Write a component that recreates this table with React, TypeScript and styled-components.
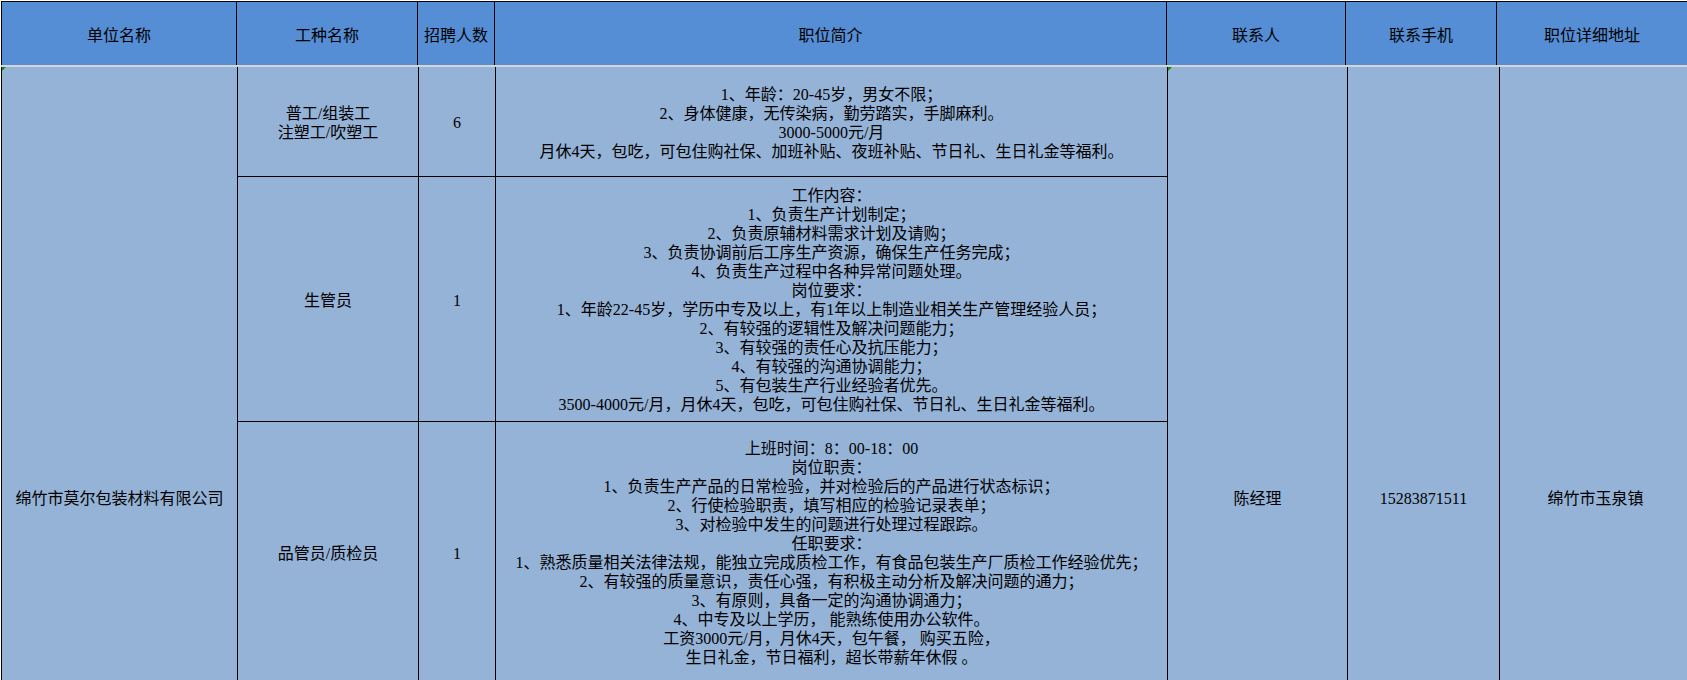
import React from "react";
import styled, { createGlobalStyle } from "styled-components";

const GlobalStyle = createGlobalStyle`
  html, body {
    margin: 0;
    padding: 0;
    overflow: hidden;
    background: #fff;
  }
`;

const COLS = [235, 181, 77, 672, 179, 151, 191];

const Sheet = styled.div`
  margin: 1px 0 0 1px;
  width: max-content;
  border-top: 1px solid #000;
  font-family: "Liberation Serif", "Noto Sans CJK SC", serif;
  font-size: 16px;
  line-height: 19px;
  color: #000;
`;

const HeaderRow = styled.div`
  display: grid;
  grid-template-columns: ${COLS.map((w) => `${w}px`).join(" ")};
  height: 63px;
  border-left: 1px solid #000;
`;

const HeaderCell = styled.div`
  display: flex;
  align-items: center;
  justify-content: center;
  padding-top: 3px;
  background: #558ed5;
  border-right: 1px solid #000;
`;

const Separator = styled.div`
  height: 2px;
  background: #d4d4d4;
`;

const Body = styled.div`
  display: flex;
  height: 860px;
  border-left: 1px solid #000;
  background: #95b3d7;
`;

const SpanCell = styled.div<{ $w: number; $mark?: boolean }>`
  position: relative;
  flex: 0 0 ${(p) => p.$w}px;
  display: flex;
  align-items: center;
  justify-content: center;
  padding-top: 2px;
  border-right: 1px solid #000;
  text-align: center;

  &::before {
    content: "";
    display: ${(p) => (p.$mark ? "block" : "none")};
    position: absolute;
    left: 0;
    top: 0;
    border-top: 4px solid #168a16;
    border-right: 4px solid transparent;
  }
`;

const Middle = styled.div`
  display: flex;
  flex-direction: column;
  flex: 0 0 ${COLS[1] + COLS[2] + COLS[3]}px;
`;

const JobRow = styled.div<{ $h?: number }>`
  display: grid;
  grid-template-columns: ${COLS[1]}px ${COLS[2]}px ${COLS[3]}px;
  height: ${(p) => (p.$h ? `${p.$h}px` : "auto")};
  flex: ${(p) => (p.$h ? "0 0 auto" : "1")};
  border-bottom: 1px solid #000;
`;

const JobCell = styled.div`
  display: flex;
  align-items: center;
  justify-content: center;
  padding-top: 2px;
  border-right: 1px solid #000;
  text-align: center;
  white-space: pre-wrap;
`;

interface IJob {
  name: string;
  count: string;
  desc: string[];
  height: number;
}

const jobs: IJob[] = [
  {
    name: "普工/组装工\n注塑工/吹塑工",
    count: "6",
    height: 109,
    desc: [
      "1、年龄：20-45岁，男女不限；",
      "2、身体健康，无传染病，勤劳踏实，手脚麻利。",
      "3000-5000元/月",
      "月休4天，包吃，可包住购社保、加班补贴、夜班补贴、节日礼、生日礼金等福利。",
    ],
  },
  {
    name: "生管员",
    count: "1",
    height: 244,
    desc: [
      "工作内容：",
      "1、负责生产计划制定；",
      "2、负责原辅材料需求计划及请购；",
      "3、负责协调前后工序生产资源，确保生产任务完成；",
      "4、负责生产过程中各种异常问题处理。",
      "岗位要求：",
      "1、年龄22-45岁，学历中专及以上，有1年以上制造业相关生产管理经验人员；",
      "2、有较强的逻辑性及解决问题能力；",
      "3、有较强的责任心及抗压能力；",
      "4、有较强的沟通协调能力；",
      "5、有包装生产行业经验者优先。",
      "3500-4000元/月，月休4天，包吃，可包住购社保、节日礼、生日礼金等福利。",
    ],
  },
  {
    name: "品管员/质检员",
    count: "1",
    height: 260,
    desc: [
      "上班时间：8：00-18：00",
      "岗位职责：",
      "1、负责生产产品的日常检验，并对检验后的产品进行状态标识；",
      "2、行使检验职责，填写相应的检验记录表单；",
      "3、对检验中发生的问题进行处理过程跟踪。",
      "任职要求：",
      "1、熟悉质量相关法律法规，能独立完成质检工作，有食品包装生产厂质检工作经验优先；",
      "2、有较强的质量意识，责任心强，有积极主动分析及解决问题的通力；",
      "3、有原则，具备一定的沟通协调通力；",
      "4、中专及以上学历， 能熟练使用办公软件。",
      "工资3000元/月，月休4天，包午餐， 购买五险，",
      "生日礼金，节日福利，超长带薪年休假 。",
    ],
  },
];

const headers = ["单位名称", "工种名称", "招聘人数", "职位简介", "联系人", "联系手机", "职位详细地址"];

function App() {
  return (
    <>
      <GlobalStyle />
      <Sheet>
        <HeaderRow>
          {headers.map((h) => (
            <HeaderCell key={h}>{h}</HeaderCell>
          ))}
        </HeaderRow>
        <Separator />
        <Body>
          <SpanCell $w={COLS[0]} $mark>
            绵竹市莫尔包装材料有限公司
          </SpanCell>
          <Middle>
            {jobs.map((job) => (
              <JobRow key={job.name} $h={job.height}>
                <JobCell>{job.name}</JobCell>
                <JobCell>{job.count}</JobCell>
                <JobCell>{job.desc.join("\n")}</JobCell>
              </JobRow>
            ))}
            <JobRow>
              <JobCell />
              <JobCell />
              <JobCell />
            </JobRow>
          </Middle>
          <SpanCell $w={COLS[4]} $mark>
            陈经理
          </SpanCell>
          <SpanCell $w={COLS[5]}>15283871511</SpanCell>
          <SpanCell $w={COLS[6]}>绵竹市玉泉镇</SpanCell>
        </Body>
      </Sheet>
    </>
  );
}

export default App;
